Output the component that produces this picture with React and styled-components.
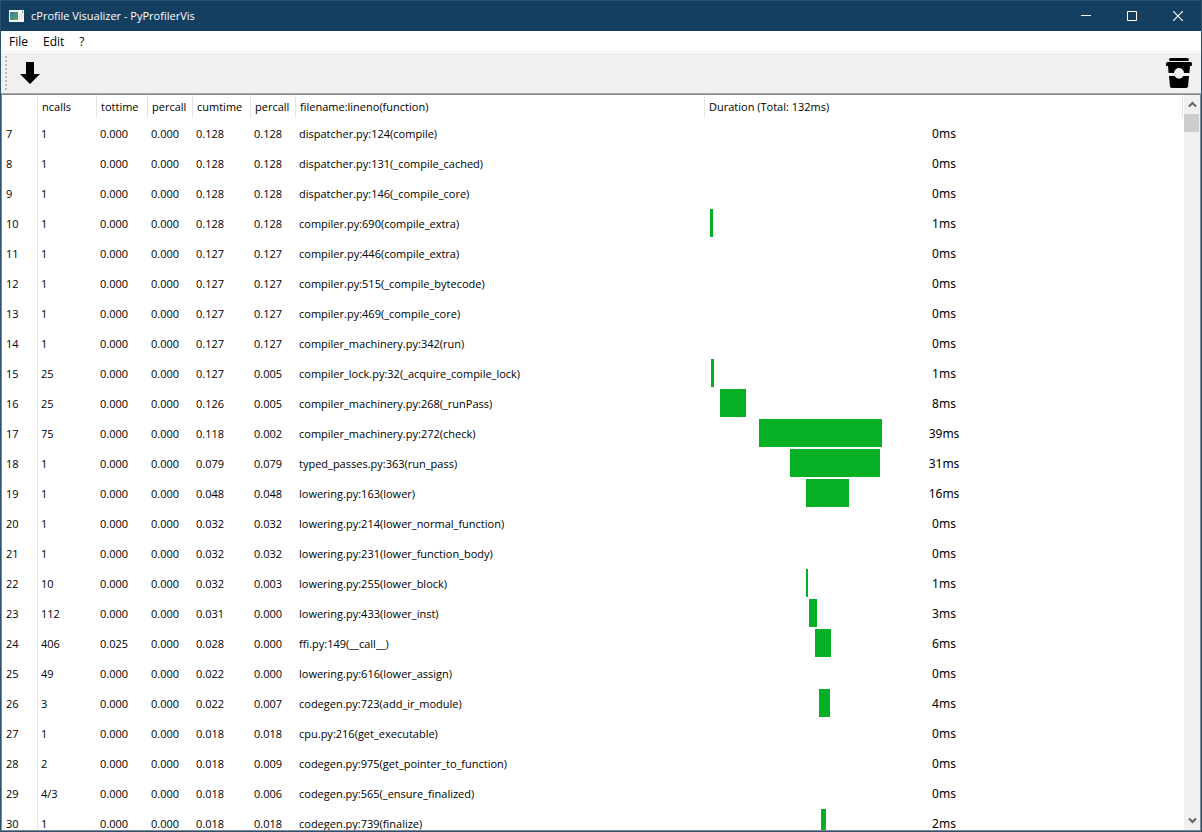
import React from "react";
import styled, { createGlobalStyle } from "styled-components";

const GlobalStyle = createGlobalStyle`
  * { box-sizing: border-box; }
  body {
    margin: 0;
    background: #fff;
    color: #000;
    font: 11px/16px "Open Sans", "Noto Sans", sans-serif;
  }
  button { font: inherit; color: inherit; background: none; border: 0; padding: 0; }
`;

const Window = styled.div`
  display: flex;
  flex-direction: column;
  height: 100vh;
  border: 1px solid #2b5270;
  border-top-width: 0;
  background: #fff;
`;

const TitleBar = styled.header`
  display: flex;
  align-items: center;
  flex: none;
  height: 31px;
  padding-left: 8px;
  gap: 7px;
  border-top: 1px solid #2b5270;
  background: #153f61;
  color: #fff;
`;

const Title = styled.h1`
  flex: 1;
  margin: 0;
  font-size: 11px;
  font-weight: 400;
`;

const CaptionButtons = styled.div`
  display: flex;
`;

const CaptionButton = styled.button`
  display: grid;
  place-items: center;
  width: 46px;
  height: 30px;
`;

const MenuBar = styled.nav`
  display: flex;
  flex: none;
  height: 21px;
  padding: 0 2px;
  margin-bottom: 1px;
  border-bottom: 1px solid #f0f0f0;
  font-size: 12px;
`;

const MenuButton = styled.button`
  padding: 1px 6px 0;
  margin-right: 3px;
`;

const ToolBar = styled.div`
  display: flex;
  align-items: center;
  flex: none;
  height: 41px;
  padding: 0 9px 0 4px;
  border-bottom: 1px solid #a8a8a8;
  background: #f0f0f0;
`;

const Grip = styled.span`
  width: 2px;
  height: 34px;
  background: repeating-linear-gradient(#bcbcbc 0 2px, transparent 2px 4px);
`;

const ToolButton = styled.button`
  display: grid;
  margin-left: ${(p) => (p.$end ? "auto" : "13px")};
`;

const View = styled.main`
  display: flex;
  flex: 1;
  min-height: 0;
  border: 1px solid #828790;
`;

const Viewport = styled.div`
  flex: 1;
  min-width: 0;
  margin-right: 1px;
  overflow: hidden;
`;

const Table = styled.table`
  width: 100%;
  table-layout: fixed;
  border-collapse: separate;
  border-spacing: 0;
`;

const Col = styled.col`
  width: ${(p) => p.$width || "auto"};
`;

const HeadCell = styled.th`
  height: 23px;
  padding: 0 4px;
  border-right: 1px solid #e5e5e5;
  font-weight: 400;
  text-align: left;
  white-space: nowrap;
`;

const IndexCell = styled.th`
  height: 30px;
  padding: 2px 4px 0;
  border-right: 1px solid #e5e5e5;
  font-weight: 400;
  text-align: left;
`;

const Cell = styled.td`
  height: 30px;
  padding: 2px 3px 0;
  white-space: nowrap;
`;

const DurationCell = styled.td`
  height: 30px;
  padding: 0;
  font: 12px/16px "Noto Sans", sans-serif;
`;

const Track = styled.div`
  display: grid;
  align-items: center;
  height: 28px;
  > * { grid-area: 1 / 1; }
`;

const Bar = styled.span`
  height: 28px;
  background: #06b025;
`;

const Duration = styled.span`
  padding-top: 2px;
  text-align: center;
`;

const ScrollBar = styled.div`
  display: flex;
  flex-direction: column;
  flex: none;
  width: 16px;
  background: #f0f0f0;
`;

const ScrollButton = styled.button`
  display: grid;
  place-items: center;
  height: 19px;
`;

const Thumb = styled.div`
  height: 18px;
  margin-right: 1px;
  background: #cdcdcd;
`;

const Spacer = styled.div`
  flex: 1;
`;

const TIMELINE = 478;

const columns = [
  ["", "36px"],
  ["ncalls", "59px"],
  ["tottime", "51px"],
  ["percall", "45px"],
  ["cumtime", "58px"],
  ["percall", "45px"],
  ["filename:lineno(function)", "409px"],
  ["Duration (Total: 132ms)", ""],
];

// index, ncalls, tottime, percall, cumtime, percall, function, ms, bar start, bar length
const rows = [
  [7, "1", "0.000", "0.000", "0.128", "0.128", "dispatcher.py:124(compile)", 0],
  [8, "1", "0.000", "0.000", "0.128", "0.128", "dispatcher.py:131(_compile_cached)", 0],
  [9, "1", "0.000", "0.000", "0.128", "0.128", "dispatcher.py:146(_compile_core)", 0],
  [10, "1", "0.000", "0.000", "0.128", "0.128", "compiler.py:690(compile_extra)", 1, 5, 3],
  [11, "1", "0.000", "0.000", "0.127", "0.127", "compiler.py:446(compile_extra)", 0],
  [12, "1", "0.000", "0.000", "0.127", "0.127", "compiler.py:515(_compile_bytecode)", 0],
  [13, "1", "0.000", "0.000", "0.127", "0.127", "compiler.py:469(_compile_core)", 0],
  [14, "1", "0.000", "0.000", "0.127", "0.127", "compiler_machinery.py:342(run)", 0],
  [15, "25", "0.000", "0.000", "0.127", "0.005", "compiler_lock.py:32(_acquire_compile_lock)", 1, 6, 3],
  [16, "25", "0.000", "0.000", "0.126", "0.005", "compiler_machinery.py:268(_runPass)", 8, 15, 26],
  [17, "75", "0.000", "0.000", "0.118", "0.002", "compiler_machinery.py:272(check)", 39, 54, 123],
  [18, "1", "0.000", "0.000", "0.079", "0.079", "typed_passes.py:363(run_pass)", 31, 85, 90],
  [19, "1", "0.000", "0.000", "0.048", "0.048", "lowering.py:163(lower)", 16, 101, 43],
  [20, "1", "0.000", "0.000", "0.032", "0.032", "lowering.py:214(lower_normal_function)", 0],
  [21, "1", "0.000", "0.000", "0.032", "0.032", "lowering.py:231(lower_function_body)", 0],
  [22, "10", "0.000", "0.000", "0.032", "0.003", "lowering.py:255(lower_block)", 1, 101, 2],
  [23, "112", "0.000", "0.000", "0.031", "0.000", "lowering.py:433(lower_inst)", 3, 104, 8],
  [24, "406", "0.025", "0.000", "0.028", "0.000", "ffi.py:149(__call__)", 6, 110, 16],
  [25, "49", "0.000", "0.000", "0.022", "0.000", "lowering.py:616(lower_assign)", 0],
  [26, "3", "0.000", "0.000", "0.022", "0.007", "codegen.py:723(add_ir_module)", 4, 114, 11],
  [27, "1", "0.000", "0.000", "0.018", "0.018", "cpu.py:216(get_executable)", 0],
  [28, "2", "0.000", "0.000", "0.018", "0.009", "codegen.py:975(get_pointer_to_function)", 0],
  [29, "4/3", "0.000", "0.000", "0.018", "0.006", "codegen.py:565(_ensure_finalized)", 0],
  [30, "1", "0.000", "0.000", "0.018", "0.018", "codegen.py:739(finalize)", 2, 116, 5],
];

const percent = (n) => `${(n / TIMELINE) * 100}%`;

function AppIcon() {
  return (
    <svg width="15" height="12" viewBox="0 0 15 12" aria-hidden="true">
      <defs>
        <linearGradient id="screen" x1="0" y1="0" x2="1" y2="1">
          <stop offset="0" stopColor="#3f7796" />
          <stop offset="1" stopColor="#57ad6b" />
        </linearGradient>
      </defs>
      <rect width="15" height="12" fill="#f4f4f4" />
      <rect x="1" y="2" width="8" height="8" fill="url(#screen)" />
      <path d="M10 4.500h3M10 6.500h3M10 8.500h3" stroke="#d8dcde" />
      <rect x="13" y="1" width="1" height="2" fill="#4a9580" />
    </svg>
  );
}

function Chevron({ down }) {
  return (
    <svg width="9" height="7" viewBox="0 0 9 7" aria-hidden="true">
      <path d={down ? "M1 1.5l3.5 3.5L8 1.5" : "M1 5.5L4.5 2L8 5.5"} fill="none" stroke="#606060" strokeWidth="2" />
    </svg>
  );
}

export default function App() {
  return (
    <>
      <GlobalStyle />
      <Window>
        <TitleBar>
          <AppIcon />
          <Title>cProfile Visualizer - PyProfilerVis</Title>
          <CaptionButtons>
            <CaptionButton aria-label="Minimize">
              <svg width="10" height="10"><path d="M0 4.500h10" stroke="#fff" /></svg>
            </CaptionButton>
            <CaptionButton aria-label="Maximize">
              <svg width="10" height="10"><path d="M.5.5h9v9h-9z" fill="none" stroke="#fff" /></svg>
            </CaptionButton>
            <CaptionButton aria-label="Close">
              <svg width="10" height="10"><path d="M0 0l10 10M10 0L0 10" stroke="#fff" strokeWidth="1.2" /></svg>
            </CaptionButton>
          </CaptionButtons>
        </TitleBar>
        <MenuBar>
          <MenuButton>File</MenuButton>
          <MenuButton>Edit</MenuButton>
          <MenuButton>?</MenuButton>
        </MenuBar>
        <ToolBar>
          <Grip />
          <ToolButton aria-label="Load profile">
            <svg width="20" height="22" viewBox="0 0 20 22">
              <path d="M6 0h8v12h6L10 22L0 12h6z" />
            </svg>
          </ToolButton>
          <ToolButton $end aria-label="Buy a coffee">
            <svg width="26" height="30" viewBox="0 0 26 30">
              <rect x="3" y="0" width="20" height="3" rx="1.5" />
              <path d="M1.5 4h23a1.5 1.5 0 0 1 1.5 1.5V7a1 1 0 0 1-1 1h-1l-.6 7H18a5 5 0 0 0-10 0H2.6L2 8H1a1 1 0 0 1-1-1V5.500A1.500 1.500 0 0 1 1.500 4z" />
              <path d="M3 18h5.600a5 5 0 0 0 8.800 0H23l-1 10.500a1.700 1.700 0 0 1-1.700 1.500H5.700A1.700 1.700 0 0 1 4 28.500z" />
            </svg>
          </ToolButton>
        </ToolBar>
        <View>
          <Viewport>
            <Table>
              <colgroup>
                {columns.map(([, width], i) => <Col key={i} $width={width} />)}
              </colgroup>
              <thead>
                <tr>
                  {columns.map(([label], i) => <HeadCell key={i} scope="col">{label}</HeadCell>)}
                </tr>
              </thead>
              <tbody>
                {rows.map(([index, ncalls, tot, perTot, cum, perCum, fn, ms, start, length]) => (
                  <tr key={index}>
                    <IndexCell scope="row">{index}</IndexCell>
                    <Cell>{ncalls}</Cell>
                    <Cell>{tot}</Cell>
                    <Cell>{perTot}</Cell>
                    <Cell>{cum}</Cell>
                    <Cell>{perCum}</Cell>
                    <Cell>{fn}</Cell>
                    <DurationCell>
                      <Track>
                        {length && <Bar style={{ marginLeft: percent(start), width: percent(length) }} />}
                        <Duration>{ms}ms</Duration>
                      </Track>
                    </DurationCell>
                  </tr>
                ))}
              </tbody>
            </Table>
          </Viewport>
          <ScrollBar>
            <ScrollButton aria-label="Scroll up"><Chevron /></ScrollButton>
            <Thumb />
            <Spacer />
            <ScrollButton aria-label="Scroll down"><Chevron down /></ScrollButton>
          </ScrollBar>
        </View>
      </Window>
    </>
  );
}
